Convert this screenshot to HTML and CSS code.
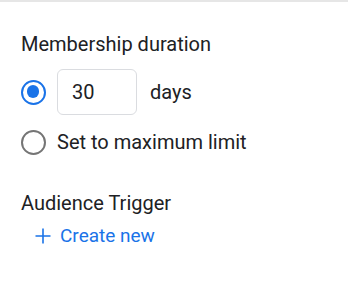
FILE: index.html
```html
<!DOCTYPE html>
<html lang="en">
<head>
  <meta charset="UTF-8">
  <title>Membership duration</title>
  <link rel="stylesheet" href="styles.css">
</head>
<body>
  <div class="panel">
    <div class="section">
      <p class="label">Membership duration</p>
      <div class="option option-days">
        <span class="radio checked"></span>
        <input class="days-input" type="text" value="30">
        <span class="text">days</span>
      </div>
      <div class="option option-max">
        <span class="radio"></span>
        <span class="text">Set to maximum limit</span>
      </div>
    </div>
    <div class="section trigger">
      <p class="label">Audience Trigger</p>
      <a href="javascript:;" class="create">
        <svg width="16" height="16" viewBox="0 0 16 16"><path d="M8 0.5v15M0.5 8h15" stroke="#1a73e8" stroke-width="1.6" fill="none"/></svg>
        <span>Create new</span>
      </a>
    </div>
  </div>
</body>
</html>
```

FILE: styles.css
```css
body{
  margin: 0;
  font-family: Roboto, "Liberation Sans", sans-serif;
  color: #202124;
  background: #fff;
}
.panel{
  border-top: 2px solid #e6e6e6;
  padding: 28px 0 0 21px;
}
.label{
  margin: 0;
  font-size: 20px;
  line-height: 28px;
}
.option{
  display: flex;
  align-items: center;
  height: 46px;
  font-size: 20px;
}
.option-days{ margin-top: 11px; }
.option-max{ margin-top: 4px; }
.radio{
  width: 25px;
  height: 25px;
  border: 2.5px solid #757575;
  border-radius: 50%;
  box-sizing: border-box;
  margin-right: 11px;
  position: relative;
  flex: none;
}
.radio.checked{
  border-color: #1a73e8;
}
.radio.checked::after{
  content: "";
  position: absolute;
  left: 3.75px;
  top: 3.75px;
  width: 12.5px;
  height: 12.5px;
  border-radius: 50%;
  background: #1a73e8;
}
.days-input{
  width: 80px;
  height: 46px;
  box-sizing: border-box;
  border: 1px solid #dadce0;
  border-radius: 6px;
  padding: 0 14px;
  font: inherit;
  color: #202124;
  margin-right: 13px;
}
.trigger{ margin-top: 24px; }
.create{
  display: flex;
  align-items: center;
  gap: 9px;
  margin: 7px 0 0 14px;
  color: #1a73e8;
  text-decoration: none;
  font-size: 19px;
  line-height: 24px;
}
```
